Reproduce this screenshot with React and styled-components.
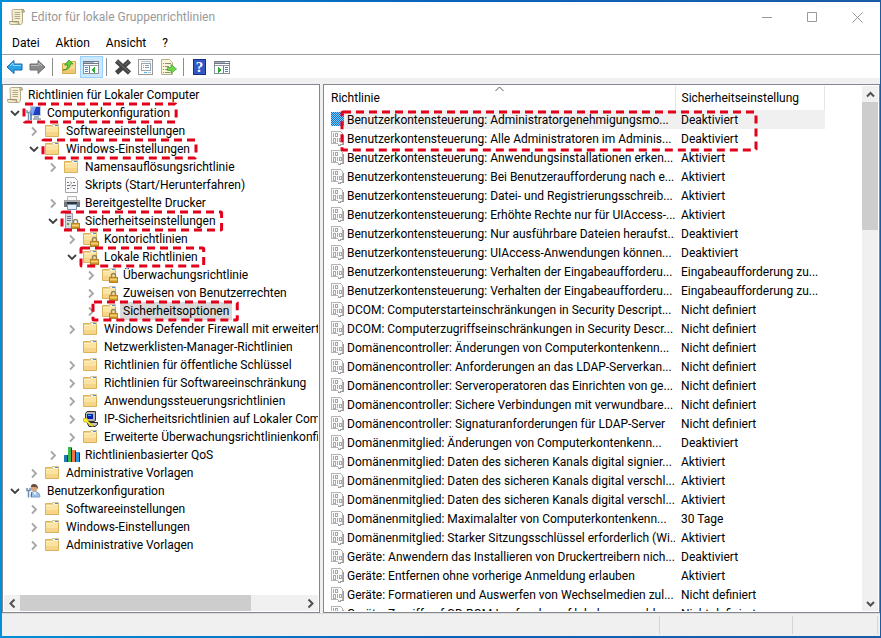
import React from "react";
import styled, { createGlobalStyle } from "styled-components";

const GlobalStyle = createGlobalStyle`
  * {
    box-sizing: border-box;
  }
  body {
    margin: 0;
    font-family: Roboto, "Open Sans", sans-serif;
    font-size: 12px;
    line-height: 18px;
    color: #000;
  }
  button {
    padding: 0;
    border: 0;
    background: none;
    font: inherit;
    color: inherit;
  }
`;

const Window = styled.div`
  height: 100vh;
  min-height: 300px;
  display: flex;
  flex-direction: column;
  padding: 2px 1px 2px 2px;
  background: linear-gradient(90deg, #0090d8, #0a62bb 50%, #1a5ba5);
`;

const TitleBar = styled.header`
  display: flex;
  align-items: center;
  height: 30px;
  padding-left: 7px;
  background: #fff;
`;

const Title = styled.h1`
  flex: 1;
  margin: 0 0 0 6px;
  font-size: 12px;
  font-weight: 400;
  color: #999;
`;

const CaptionButton = styled.button`
  width: 45px;
  height: 30px;
  display: grid;
  place-items: center;
`;

const MenuBar = styled.nav`
  display: flex;
  gap: 16px;
  height: 22px;
  padding-left: 10px;
  background: #fff;
`;

const ToolBar = styled.div`
  display: flex;
  height: 24px;
  padding: 1px 0 0 1px;
  border-top: 1px solid #a0a0a0;
  background: #fff;
`;

const ToolButton = styled.button`
  width: 23px;
  height: 22px;
  display: grid;
  place-items: center;
  background: ${(props) => (props.$active ? "#cce8ff" : "none")};
  box-shadow: ${(props) => (props.$active ? "inset 0 0 0 1px #99d1ff" : "none")};
`;

const Separator = styled.span`
  width: 8px;
  &::before {
    content: "";
    display: block;
    width: 1px;
    height: 18px;
    margin: 2px 0 0 3px;
    background: #8d8d8d;
  }
`;

const Body = styled.main`
  flex: 1;
  min-height: 0;
  display: grid;
  grid-template-columns: 318px minmax(0, 1fr);
  gap: 3px;
  padding-top: 6px;
  background: #f0f0f0;
`;

const Pane = styled.section`
  display: flex;
  flex-direction: ${(props) => (props.$row ? "row" : "column")};
  min-width: 0;
  min-height: 0;
  padding: 1px;
  border: 1px solid #828790;
  background: #fff;
`;

const Tree = styled.ul`
  flex: 1;
  min-height: 0;
  margin: 0;
  padding: 0;
  list-style: none;
  overflow: hidden;
`;

const Node = styled.li`
  display: flex;
  align-items: center;
  height: 18px;
  padding-left: ${(props) => Math.max(props.$level * 19 - 15, 3)}px;
  white-space: nowrap;
`;

const Toggle = styled.button`
  flex: none;
  width: 18px;
  height: 18px;
  padding-right: 4px;
  display: grid;
  place-items: center;
`;

const NodeContent = styled.span`
  position: relative;
  display: flex;
  align-items: center;
  height: 18px;
`;

const NodeLabel = styled.span`
  margin-left: 2px;
  padding: 0 3px;
  background: ${(props) => (props.$selected ? "#d9d9d9" : "none")};
`;

const Mark = styled.svg`
  position: absolute;
  left: ${(props) => (props.$wide ? -9 : -2)}px;
  top: 0;
  width: calc(100% + ${(props) => (props.$wide ? 14 : 5)}px);
  height: 18px;
  overflow: visible;
`;

const ListMark = styled(Mark)`
  left: 17px;
  top: 26px;
  width: 414px;
  height: 38px;
`;

const ScrollBar = styled.div`
  flex: none;
  display: flex;
  flex-direction: ${(props) => (props.$vertical ? "column" : "row")};
  ${(props) => (props.$vertical ? "width" : "height")}: 16px;
  background: #f0f0f0;
`;

const ScrollButton = styled.button`
  flex: none;
  width: 16px;
  height: 16px;
  display: grid;
  place-items: center;
`;

const ScrollTrack = styled.div`
  flex: 1;
  display: flex;
  flex-direction: inherit;
`;

const ScrollThumb = styled.div`
  flex: 0 0 ${(props) => props.$size};
  background: #cdcdcd;
`;

const ListView = styled.div`
  position: relative;
  flex: 1;
  min-width: 0;
  overflow: hidden;
`;

const Table = styled.table`
  width: 500px;
  table-layout: fixed;
  border-collapse: collapse;
  th,
  td {
    padding: 0 0 0 6px;
    text-align: left;
    font-weight: 400;
    white-space: nowrap;
    overflow: hidden;
  }
  th {
    position: relative;
    height: 24px;
    border-right: 1px solid #e5e5e5;
  }
  td {
    height: 19px;
  }
`;

const SortArrow = styled.svg`
  position: absolute;
  left: 50%;
  top: 0;
  margin-left: -5px;
`;

const Policy = styled.div`
  display: flex;
  align-items: center;
  height: 19px;
  svg {
    flex: none;
  }
`;

const PolicyName = styled.span`
  flex: 1;
  padding: 1px 0 0 3px;
  background: ${(props) => (props.$selected ? "#f0f0f0" : "none")};
`;

const ValueCell = styled.td`
  background: ${(props) => (props.$selected ? "#f0f0f0" : "none")};
`;

const StatusBar = styled.footer`
  display: flex;
  height: 23px;
  padding: 2px 2px 2px 0;
  border-top: 1px solid #dcdcdc;
  background: #f0f0f0;
`;

const StatusCell = styled.span`
  flex: ${(props) => (props.$width ? `0 0 ${props.$width}px` : 1)};
  border-right: 1px solid #d5d5d5;
`;

const ScrollIcon = () => (
  <svg width="16" height="16" viewBox="0 0 16 16">
    <path d="M3 1.5Q3 .5 4.5.5H15Q13.500 1 13.500 3V12Q13.500 15.500 11.500 15.500H2Q.5 15.500.5 13.500V12.500H3.500Z" fill="#f7efd2" stroke="#b5ab8c" />
    <path d="M12 .5Q15.500 0 15.500 3H12.500M.5 12.500H9.500V14.500L11 15.500" fill="#d9cda0" stroke="#9c9275" />
    <path d="M5.500 3.500H11M5.500 5.500H11M5.500 7.500H11M5.500 9.500H11" stroke="#b0a88f" />
  </svg>
);

const FolderShape = () => (
  <>
    <path d="M.5 2.500H6.500L8 1.500H13.500V13.500H.5Z" fill="#f0cf80" stroke="#d9b35c" />
    <path d="M7.500 1.500H13.500V3.500H7.500Z" fill="#f9f5e5" stroke="#d6c699" />
    <path d="M10 2.500H13" stroke="#4a90d9" />
    <path d="M1 4.500H7L8.500 3.500H13V13H1Z" fill="#fbe3a2" />
    <path d="M1 9H13V13H1Z" fill="#f6d588" />
    <path d="M1 4.500H7L8.500 3.500H13" fill="none" stroke="#fff1c4" />
  </>
);

const LockShape = () => (
  <>
    <path d="M9.500 10V8.500Q9.500 6.500 11.500 6.500T13.500 8.500V10" fill="none" stroke="#94835a" strokeWidth="1.500" />
    <rect x="7.500" y="10.500" width="8" height="5" fill="#e5b03f" stroke="#b5852a" />
    <path d="M8 12.500H15" stroke="#f3cf78" />
    <path d="M8 14.500H15" stroke="#c8922a" />
  </>
);

const FolderIcon = () => (
  <svg width="16" height="16" viewBox="0 0 16 16">
    <FolderShape />
  </svg>
);

const LockedFolderIcon = () => (
  <svg width="16" height="16" viewBox="0 0 16 16">
    <FolderShape />
    <LockShape />
  </svg>
);

const ServerIcon = () => (
  <svg width="16" height="16" viewBox="0 0 16 16">
    <path d="M1.500.5H8.500V15.500H1.500Z" fill="#d7dbe0" stroke="#9aa1a9" />
    <path d="M3 3.500H7M3 5.500H7M3 7.500H7" stroke="#6d757e" />
    <path d="M3 11H5" stroke="#4fae3a" strokeWidth="2" />
    <LockShape />
  </svg>
);

const ComputerIcon = () => (
  <svg width="16" height="16" viewBox="0 0 16 16">
    <path d="M4.500 1.500H14.500V10.500H4.500Z" fill="#1d3fc4" stroke="#c5ccd6" />
    <path d="M5 2H10L7 10H5Z" fill="#7fa6f2" />
    <path d="M8 11H13V13H15V15H7V13H8Z" fill="#a9b0b8" />
    <path d="M1 5V7.500H4.500V5M2.500 7V15.500" fill="none" stroke="#7a93b5" strokeWidth="1.500" />
    <path d="M5 8V15" stroke="#3f74b5" strokeWidth="1.500" />
  </svg>
);

const UserIcon = () => (
  <svg width="16" height="16" viewBox="0 0 16 16">
    <path d="M5 14Q4.500 9 8 8.500L11 9Q14 10 14 14Z" fill="#9dc2ea" stroke="#7f9fc2" />
    <circle cx="8" cy="5" r="3.500" fill="#d6a67e" />
    <path d="M5 4Q5 .5 8.500 1T12 6L10 4Z" fill="#665041" />
    <path d="M7 9L9 12L10.500 9.500Z" fill="#fff" />
    <path d="M1 5V7.500H4V5M2.500 7V14.500" fill="none" stroke="#6d8cb3" strokeWidth="1.500" />
    <path d="M5.500 9V14" stroke="#3f74b5" />
  </svg>
);

const ScriptIcon = () => (
  <svg width="16" height="16" viewBox="0 0 16 16">
    <path d="M1.500.5H10.500L13.500 3.500V15.500H1.500Z" fill="#fafafa" stroke="#a5a5a5" />
    <path d="M3 5.500H5M9 5.500H11M3 8.500H6M8 8.500H12M3 11.500H5M9 11.500H11" stroke="#717780" />
    <path d="M6 4.500L8 6L6 7.500L8 9.500L6 11.500" fill="none" stroke="#a8adb3" />
  </svg>
);

const PrinterIcon = () => (
  <svg width="16" height="16" viewBox="0 0 16 16">
    <path d="M3.500 1.500H12.500V6H3.500Z" fill="#f7f7f7" stroke="#b5b5b5" />
    <path d="M0 5H16V12H0Z" fill="#70757b" />
    <path d="M0 5H16V7H0Z" fill="#a4a8ad" />
    <path d="M3 7H13V9H3Z" fill="#303438" />
    <path d="M3.500 9.500H12.500V14.500H3.500Z" fill="#e6f0fa" stroke="#7390ad" />
  </svg>
);

const IpIcon = () => (
  <svg width="16" height="16" viewBox="0 0 16 16">
    <path d="M2.500 2.500L4 .5H12.500V9.500L11 10.500H2.500Z" fill="#b5b5b5" stroke="#333" />
    <path d="M4 3H10V8H4Z" fill="#0820b0" />
    <path d="M5 4.500H8" stroke="#2ec8ff" />
    <path d="M4 11.500H14.500V13.500L12 15.500H6Z" fill="#c4c4c4" stroke="#222" />
    <path d="M0 8L3 7L5 8V10L11 15L9 15.500L3 11H1Z" fill="#fff02b" stroke="#9a8f00" strokeWidth=".5" />
  </svg>
);

const ChartIcon = () => (
  <svg width="16" height="16" viewBox="0 0 16 16">
    <path d="M0 8H4V15H0Z" fill="#1f7bb0" />
    <path d="M4 0H8V15H4Z" fill="#3cba4a" />
    <path d="M8 3H12V15H8Z" fill="#f0734a" />
    <path d="M12 5H16V15H12Z" fill="#2a9be0" />
    <path d="M3.500 8V15M7.500 1V15M11.500 4V15M15.500 6V15" stroke="#1d2f3d" />
  </svg>
);

const PolicyIcon = ({ selected }) => (
  <svg width="13" height="15" viewBox="0 0 13 15" shapeRendering="crispEdges">
    {selected && (
      <defs>
        <pattern id="dither" width="2" height="2" patternUnits="userSpaceOnUse">
          <rect width="2" height="2" fill="#8cc6f5" />
          <path d="M0 0H1V1H0ZM1 1H2V2H1Z" fill="#0078d7" />
        </pattern>
      </defs>
    )}
    {selected ? (
      <rect width="13" height="14" fill="url(#dither)" />
    ) : (
      <>
        <path d="M.5.5H9.500L11.500 2.500V13.500H9.500L8.500 14.500L6.500 12.500H.5Z" fill="#fafafa" stroke="#b5b5b5" />
        <path d="M9 13H12V4M7 14H10" fill="none" stroke="#9c9c9c" />
        <path d="M2.500 2V6M4.500 2.500H6.500V5.500H4.500ZM2.500 7.500H4.500V11H2.500ZM6.500 7V11M8.500 7.500H10.500V10.500H8.500Z" fill="none" stroke="#a8a8a8" />
      </>
    )}
  </svg>
);

const icons = {
  scroll: ScrollIcon,
  folder: FolderIcon,
  locked: LockedFolderIcon,
  server: ServerIcon,
  computer: ComputerIcon,
  user: UserIcon,
  script: ScriptIcon,
  printer: PrinterIcon,
  ip: IpIcon,
  chart: ChartIcon,
};

const Arrow = ({ direction }) => {
  const paths = {
    left: "M9.500 3.500L5.500 7.500L9.500 11.500",
    right: "M5.500 3.500L9.500 7.500L5.500 11.500",
    up: "M4 9.500L7.500 6L11 9.500",
    down: "M4 6L7.500 9.500L11 6",
  };
  return (
    <svg width="15" height="15" viewBox="0 0 15 15">
      <path d={paths[direction]} fill="none" stroke="#505050" strokeWidth="2" />
    </svg>
  );
};

const Chevron = ({ open }) => (
  <svg width="12" height="12" viewBox="0 0 12 12">
    <path
      d={open ? "M2 4L6 8L10 4" : "M4 2.500L8 6.500L4 10.500"}
      fill="none"
      stroke={open ? "#404040" : "#a6a6a6"}
      strokeWidth="1.800"
    />
  </svg>
);

const Dashes = () => (
  <rect
    width="100%"
    height="100%"
    rx="1"
    fill="none"
    stroke="#e2001a"
    strokeWidth="3"
    strokeDasharray="8 5"
  />
);

const HistoryIcon = ({ forward }) => (
  <svg width="17" height="16" viewBox="0 0 17 16">
    <path
      d={forward ? "M16 8L9 1.500V5H1V11H9V14.500Z" : "M1 8L8 1.500V5H16V11H8V14.500Z"}
      fill={forward ? "#8b8b8b" : "#2ba3ea"}
      stroke={forward ? "#6e6e6e" : "#1569ae"}
    />
    <path d={forward ? "M2 6.500H10V4L13 7" : "M15 6.500H7V4L4 7"} fill="none" stroke={forward ? "#bbb" : "#8fd9ff"} />
  </svg>
);

const FolderUpIcon = () => (
  <svg width="16" height="16" viewBox="0 0 16 16">
    <path d="M1.500 4.500H8L9.500 2.500H14.500V14.500H1.500Z" fill="#f7d98e" stroke="#d6ab50" />
    <path d="M2 10H14V14H2Z" fill="#f0c973" />
    <path d="M2 11Q7 11 6.500 6H3.500L8 1L12 5H9.500Q9 11 2 11Z" fill="#5fd13a" stroke="#288c18" strokeWidth=".7" />
  </svg>
);

const PanelIcon = ({ mirrored }) => (
  <svg width="17" height="16" viewBox="0 0 17 16" shapeRendering="crispEdges">
    <path d="M.5 2.500H15.500V14.500H.5Z" fill="#fff" stroke="#8a929c" />
    <path d="M0 2.500H16M0 4.500H16" stroke="#6f7883" />
    <path d="M1 3.500H11" stroke="#a5b3c4" />
    <path d="M1 6.500H15" stroke="#8f98a3" />
    <path d={mirrored ? "M9.500 7V14" : "M6.500 7V14"} stroke="#727a84" />
    <path d={mirrored ? "M11 8.500H14M11 10.500H14M11 12.500H14" : "M2 8.500H5M2 10.500H5M2 12.500H5"} stroke="#4b83bd" />
    <path d={mirrored ? "M4 8L8 11L4 14Z" : "M12 8L8 11L12 14Z"} fill="#2fae35" />
  </svg>
);

const DeleteIcon = () => (
  <svg width="18" height="18" viewBox="0 0 18 18">
    <path d="M2.500 3L15.500 15M15.500 3L2.500 15" stroke="#444" strokeWidth="4.500" />
    <path d="M3 3L15 14M15 3.500L11 7" stroke="#777" />
  </svg>
);

const PropertiesIcon = () => (
  <svg width="16" height="16" viewBox="0 0 16 16" shapeRendering="crispEdges">
    <path d="M.5.5H14.500V15.500H.5Z" fill="#fafafa" stroke="#9a9a9a" />
    <path d="M3 2.500H13" stroke="#b5c1cd" />
    <path d="M3.500 4.500H12.500V11.500H3.500Z" fill="#fff" stroke="#94a6b8" />
    <path d="M5 6.500H6M7 6.500H11M5 8.500H6M7 8.500H11" stroke="#8a9bab" />
    <path d="M6 13.500H9" stroke="#4fb4e6" />
    <path d="M10 13.500H13" stroke="#b5c1cd" />
  </svg>
);

const ExportIcon = () => (
  <svg width="17" height="16" viewBox="0 0 17 16">
    <path d="M1.500.5H9.500L12.500 3.500V15.500H1.500Z" fill="#fcf6d4" stroke="#b8b08f" />
    <path d="M3 4.500H4M5 4.500H11M3 7.500H4M5 7.500H9M3 10.500H4M5 10.500H8M3 13.500H4M5 13.500H10" stroke="#8a8a7c" />
    <path d="M7.500 8.500H11V5.500L16.500 10L11 14.500V11.500H7.500Z" fill="#6fd64c" stroke="#38a32a" strokeWidth=".7" />
  </svg>
);

const HelpGlyph = styled.span`
  width: 13px;
  height: 16px;
  border: 1px solid #172d80;
  background: #3257c7;
  color: #fff;
  font: bold 15px/14px "Liberation Serif", serif;
`;

const nodes = [
  { level: 0, icon: "scroll", label: "Richtlinien für Lokaler Computer" },
  { level: 1, icon: "computer", label: "Computerkonfiguration", toggle: "open", marked: true },
  { level: 2, icon: "folder", label: "Softwareeinstellungen", toggle: "closed" },
  { level: 2, icon: "folder", label: "Windows-Einstellungen", toggle: "open", marked: true },
  { level: 3, icon: "folder", label: "Namensauflösungsrichtlinie", toggle: "closed" },
  { level: 3, icon: "script", label: "Skripts (Start/Herunterfahren)" },
  { level: 3, icon: "printer", label: "Bereitgestellte Drucker", toggle: "closed" },
  { level: 3, icon: "server", label: "Sicherheitseinstellungen", toggle: "open", marked: true },
  { level: 4, icon: "locked", label: "Kontorichtlinien", toggle: "closed" },
  { level: 4, icon: "locked", label: "Lokale Richtlinien", toggle: "open", marked: true },
  { level: 5, icon: "locked", label: "Überwachungsrichtlinie", toggle: "closed" },
  { level: 5, icon: "locked", label: "Zuweisen von Benutzerrechten", toggle: "closed" },
  { level: 5, icon: "locked", label: "Sicherheitsoptionen", toggle: "closed", marked: true, selected: true },
  { level: 4, icon: "folder", label: "Windows Defender Firewall mit erweitert", toggle: "closed" },
  { level: 4, icon: "folder", label: "Netzwerklisten-Manager-Richtlinien" },
  { level: 4, icon: "folder", label: "Richtlinien für öffentliche Schlüssel", toggle: "closed" },
  { level: 4, icon: "folder", label: "Richtlinien für Softwareeinschränkung", toggle: "closed" },
  { level: 4, icon: "folder", label: "Anwendungssteuerungsrichtlinien", toggle: "closed" },
  { level: 4, icon: "ip", label: "IP-Sicherheitsrichtlinien auf Lokaler Com", toggle: "closed" },
  { level: 4, icon: "folder", label: "Erweiterte Überwachungsrichtlinienkonfi", toggle: "closed" },
  { level: 3, icon: "chart", label: "Richtlinienbasierter QoS", toggle: "closed" },
  { level: 2, icon: "folder", label: "Administrative Vorlagen", toggle: "closed" },
  { level: 1, icon: "user", label: "Benutzerkonfiguration", toggle: "open" },
  { level: 2, icon: "folder", label: "Softwareeinstellungen", toggle: "closed" },
  { level: 2, icon: "folder", label: "Windows-Einstellungen", toggle: "closed" },
  { level: 2, icon: "folder", label: "Administrative Vorlagen", toggle: "closed" },
];

const policies = [
  ["Benutzerkontensteuerung: Administratorgenehmigungsmo...", "Deaktiviert"],
  ["Benutzerkontensteuerung: Alle Administratoren im Adminis...", "Deaktiviert"],
  ["Benutzerkontensteuerung: Anwendungsinstallationen erken...", "Aktiviert"],
  ["Benutzerkontensteuerung: Bei Benutzeraufforderung nach e...", "Aktiviert"],
  ["Benutzerkontensteuerung: Datei- und Registrierungsschreib...", "Aktiviert"],
  ["Benutzerkontensteuerung: Erhöhte Rechte nur für UIAccess-...", "Aktiviert"],
  ["Benutzerkontensteuerung: Nur ausführbare Dateien heraufst...", "Deaktiviert"],
  ["Benutzerkontensteuerung: UIAccess-Anwendungen können...", "Deaktiviert"],
  ["Benutzerkontensteuerung: Verhalten der Eingabeaufforderu...", "Eingabeaufforderung zu..."],
  ["Benutzerkontensteuerung: Verhalten der Eingabeaufforderu...", "Eingabeaufforderung zu..."],
  ["DCOM: Computerstarteinschränkungen in Security Descript...", "Nicht definiert"],
  ["DCOM: Computerzugriffseinschränkungen in Security Descr...", "Nicht definiert"],
  ["Domänencontroller: Änderungen von Computerkontenkenn...", "Nicht definiert"],
  ["Domänencontroller: Anforderungen an das LDAP-Serverkan...", "Nicht definiert"],
  ["Domänencontroller: Serveroperatoren das Einrichten von ge...", "Nicht definiert"],
  ["Domänencontroller: Sichere Verbindungen mit verwundbare...", "Nicht definiert"],
  ["Domänencontroller: Signaturanforderungen für LDAP-Server", "Nicht definiert"],
  ["Domänenmitglied: Änderungen von Computerkontenkenn...", "Deaktiviert"],
  ["Domänenmitglied: Daten des sicheren Kanals digital signier...", "Aktiviert"],
  ["Domänenmitglied: Daten des sicheren Kanals digital verschl...", "Aktiviert"],
  ["Domänenmitglied: Daten des sicheren Kanals digital verschl...", "Aktiviert"],
  ["Domänenmitglied: Maximalalter von Computerkontenkenn...", "30 Tage"],
  ["Domänenmitglied: Starker Sitzungsschlüssel erforderlich (Wi...", "Aktiviert"],
  ["Geräte: Anwendern das Installieren von Druckertreibern nich...", "Deaktiviert"],
  ["Geräte: Entfernen ohne vorherige Anmeldung erlauben", "Aktiviert"],
  ["Geräte: Formatieren und Auswerfen von Wechselmedien zul...", "Nicht definiert"],
  ["Geräte: Zugriff auf CD-ROM-Laufwerke auf lokal angemeld...", "Nicht definiert"],
];

const TreeNode = ({ level, icon, label, toggle, marked, selected }) => {
  const Icon = icons[icon];
  return (
    <Node $level={level}>
      {level > 0 && (
        <Toggle disabled={!toggle} aria-label={toggle && label} aria-expanded={toggle === "open"}>
          {toggle && <Chevron open={toggle === "open"} />}
        </Toggle>
      )}
      <NodeContent>
        <Icon />
        <NodeLabel $selected={selected}>{label}</NodeLabel>
        {marked && (
          <Mark $wide={selected}>
            <Dashes />
          </Mark>
        )}
      </NodeContent>
    </Node>
  );
};

const PolicyTable = () => (
  <Table>
    <colgroup>
      <col style={{ width: 350 }} />
      <col />
    </colgroup>
    <thead>
      <tr>
        <th>
          Richtlinie
          <SortArrow width="9" height="6" viewBox="0 0 9 6">
            <path d="M.5 5L4.500 1L8.500 5" fill="none" stroke="#555" />
          </SortArrow>
        </th>
        <th>Sicherheitseinstellung</th>
      </tr>
    </thead>
    <tbody>
      {policies.map(([name, value], index) => (
        <tr key={index}>
          <td>
            <Policy>
              <PolicyIcon selected={index === 0} />
              <PolicyName $selected={index === 0}>{name}</PolicyName>
            </Policy>
          </td>
          <ValueCell $selected={index === 0}>{value}</ValueCell>
        </tr>
      ))}
    </tbody>
  </Table>
);

const App = () => {
  return (
    <>
      <GlobalStyle />
      <Window>
        <TitleBar>
          <ScrollIcon />
          <Title>Editor für lokale Gruppenrichtlinien</Title>
          <CaptionButton aria-label="Minimieren">
            <svg width="11" height="11" stroke="#999">
              <path d="M0 5.500H10" />
            </svg>
          </CaptionButton>
          <CaptionButton aria-label="Maximieren">
            <svg width="11" height="11" fill="none" stroke="#999">
              <path d="M.5.5H9.500V9.500H.5Z" />
            </svg>
          </CaptionButton>
          <CaptionButton aria-label="Schließen">
            <svg width="11" height="11" stroke="#999">
              <path d="M.5.5L10.500 10.500M10.500.5L.5 10.500" />
            </svg>
          </CaptionButton>
        </TitleBar>
        <MenuBar>
          <button>Datei</button>
          <button>Aktion</button>
          <button>Ansicht</button>
          <button>?</button>
        </MenuBar>
        <ToolBar>
          <ToolButton aria-label="Zurück"><HistoryIcon /></ToolButton>
          <ToolButton aria-label="Vorwärts"><HistoryIcon forward /></ToolButton>
          <Separator />
          <ToolButton aria-label="Eine Ebene nach oben"><FolderUpIcon /></ToolButton>
          <ToolButton aria-label="Konsolenstruktur" $active><PanelIcon /></ToolButton>
          <Separator />
          <ToolButton aria-label="Löschen"><DeleteIcon /></ToolButton>
          <ToolButton aria-label="Eigenschaften"><PropertiesIcon /></ToolButton>
          <ToolButton aria-label="Liste exportieren"><ExportIcon /></ToolButton>
          <Separator />
          <ToolButton aria-label="Hilfe"><HelpGlyph>?</HelpGlyph></ToolButton>
          <ToolButton aria-label="Aktionsbereich"><PanelIcon mirrored /></ToolButton>
        </ToolBar>
        <Body>
          <Pane>
            <Tree>
              {nodes.map((node, index) => (
                <TreeNode key={index} {...node} />
              ))}
            </Tree>
            <ScrollBar>
              <ScrollButton aria-label="Nach links"><Arrow direction="left" /></ScrollButton>
              <ScrollTrack><ScrollThumb $size="82%" /></ScrollTrack>
              <ScrollButton aria-label="Nach rechts"><Arrow direction="right" /></ScrollButton>
            </ScrollBar>
          </Pane>
          <Pane $row>
            <ListView>
              <PolicyTable />
              <ListMark>
                <Dashes />
              </ListMark>
            </ListView>
            <ScrollBar $vertical>
              <ScrollButton aria-label="Nach oben"><Arrow direction="up" /></ScrollButton>
              <ScrollTrack><ScrollThumb $size="26%" /></ScrollTrack>
              <ScrollButton aria-label="Nach unten"><Arrow direction="down" /></ScrollButton>
            </ScrollBar>
          </Pane>
        </Body>
        <StatusBar>
          <StatusCell />
          <StatusCell $width={133} />
          <StatusCell $width={85} />
        </StatusBar>
      </Window>
    </>
  );
};

export default App;
